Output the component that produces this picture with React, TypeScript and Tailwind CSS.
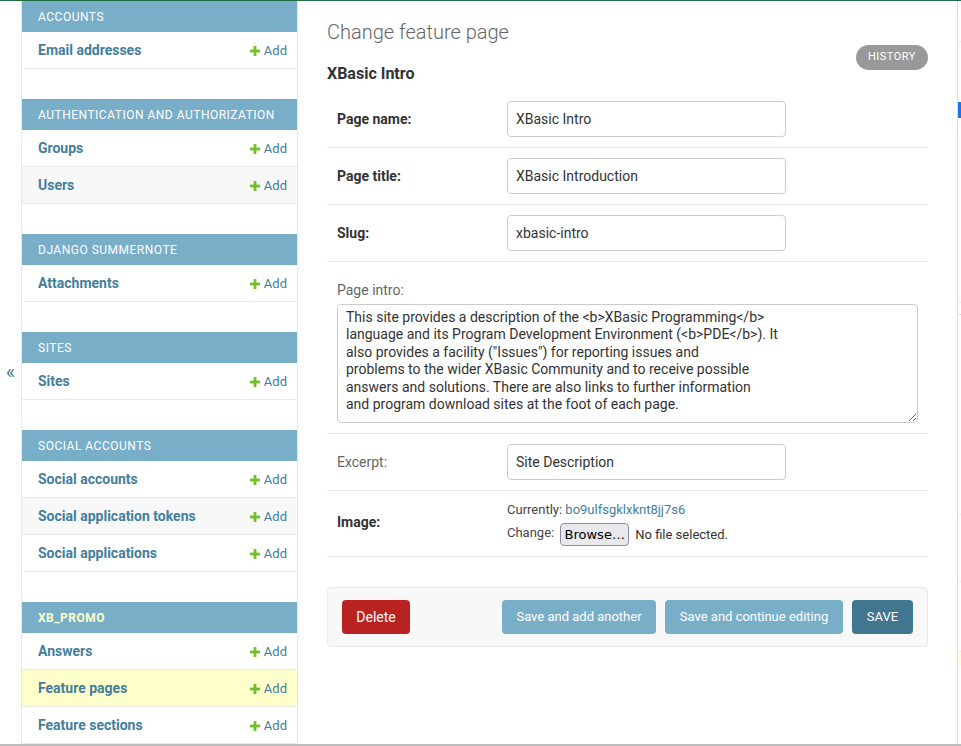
import React from "react";

type Model = { name: string; current?: boolean };
type Module = { caption: string; current?: boolean; models: Model[] };

const modules: Module[] = [
  { caption: "Accounts", models: [{ name: "Email addresses" }] },
  {
    caption: "Authentication and Authorization",
    models: [{ name: "Groups" }, { name: "Users" }],
  },
  { caption: "Django Summernote", models: [{ name: "Attachments" }] },
  { caption: "Sites", models: [{ name: "Sites" }] },
  {
    caption: "Social Accounts",
    models: [
      { name: "Social accounts" },
      { name: "Social application tokens" },
      { name: "Social applications" },
    ],
  },
  {
    caption: "xb_promo",
    current: true,
    models: [
      { name: "Answers" },
      { name: "Feature pages", current: true },
      { name: "Feature sections" },
    ],
  },
];

const PlusIcon = () => (
  <svg width="10" height="10" viewBox="0 0 10 10" className="mr-[4px]">
    <rect x="3.6" y="0" width="2.8" height="10" fill="#70bf2b" />
    <rect x="0" y="3.6" width="10" height="2.8" fill="#70bf2b" />
  </svg>
);

const Sidebar = () => (
  <div className="w-[277px] shrink-0 border-x border-[#e8e8e8] bg-white">
    {modules.map((m) => (
      <div key={m.caption} className="mb-[30px]">
        <div
          className={
            m.current
              ? "h-[31px] bg-[#79aec8] pl-[16px] flex items-center text-[12px] uppercase tracking-[0.5px] font-bold text-[#ffffcc]"
              : "h-[31px] bg-[#79aec8] pl-[16px] flex items-center text-[12px] uppercase tracking-[0.5px] text-white"
          }
        >
          {m.caption}
        </div>
        {m.models.map((model, i) => (
          <div
            key={model.name}
            className={
              model.current
                ? "h-[37px] flex items-center justify-between pl-[16px] pr-[10px] border-b border-[#eaeaea] bg-[#ffffcc]"
                : i % 2 === 1
                ? "h-[37px] flex items-center justify-between pl-[16px] pr-[10px] border-b border-[#eaeaea] bg-[#f8f8f8]"
                : "h-[37px] flex items-center justify-between pl-[16px] pr-[10px] border-b border-[#eaeaea] bg-white"
            }
          >
            <span className="text-[14px] font-bold text-[#447e9b]">{model.name}</span>
            <span className="flex items-center text-[13px] text-[#447e9b] pt-[1px]">
              <PlusIcon />
              Add
            </span>
          </div>
        ))}
      </div>
    ))}
  </div>
);

const TextRow = ({ label, value, required = true }: { label: string; value: string; required?: boolean }) => (
  <div className="flex items-center py-[10px] px-[10px] border-b border-[#eaeaea]">
    <label
      className={
        required
          ? "w-[170px] shrink-0 text-[14px] font-bold text-[#333]"
          : "w-[170px] shrink-0 text-[14px] text-[#666]"
      }
    >
      {label}
    </label>
    <input
      readOnly
      value={value}
      className="w-[279px] h-[36px] border border-[#cccccc] rounded-[4px] px-[8px] text-[14px] text-[#333] bg-white outline-none"
    />
  </div>
);

const intro =
  'This site provides a description of the <b>XBasic Programming</b>\nlanguage and its Program Development Environment (<b>PDE</b>). It\nalso provides a facility ("Issues") for reporting issues and\nproblems to the wider XBasic Community and to receive possible\nanswers and solutions. There are also links to further information\nand program download sites at the foot of each page.';

export default function App() {
  return (
    <div className="w-[961px] h-[746px] overflow-hidden flex flex-col bg-white font-['Roboto','Liberation_Sans',sans-serif] text-[#333]">
      <div className="h-[1px] bg-[#1f6e43] shrink-0" />
      <div className="flex flex-1 min-h-0">
        <div className="w-[21px] shrink-0 flex items-center justify-center text-[20px] text-[#447e9b] pb-[2px]">
          «
        </div>
        <Sidebar />
        <main className="flex-1 pt-[19px] px-[29px]">
          <h1 className="text-[20px] leading-[24px] font-light text-[#666]">Change feature page</h1>
          <div className="flex items-start justify-between">
            <h2 className="mt-[20px] text-[16px] leading-[20px] font-bold text-[#333]">XBasic Intro</h2>
            <span className="mt-[1px] h-[25px] w-[72px] rounded-full bg-[#999] text-white text-[11px] tracking-[0.5px] flex items-center justify-center">
              HISTORY
            </span>
          </div>
          <div className="mt-[7px]">
            <TextRow label="Page name:" value="XBasic Intro" />
            <TextRow label="Page title:" value="XBasic Introduction" />
            <TextRow label="Slug:" value="xbasic-intro" />
            <div className="pt-[20px] pb-[10px] px-[10px] border-b border-[#eaeaea]">
              <label className="block text-[14px] leading-[18px] text-[#666] -mt-[1px] mb-[1px]">Page intro:</label>
              <textarea
                readOnly
                value={intro}
                className="mt-[5px] w-[581px] h-[119px] border border-[#cccccc] rounded-[4px] px-[8px] pt-[4px] text-[14px] leading-[17.4px] text-[#333] bg-white outline-none resize-y block"
              />
            </div>
            <TextRow label="Excerpt:" value="Site Description" required={false} />
            <div className="flex items-center pt-[11px] pb-[10px] px-[10px] border-b border-[#eaeaea]">
              <label className="w-[170px] shrink-0 -mt-[4px] text-[14px] font-bold text-[#333]">Image:</label>
              <div className="flex flex-col text-[13px] text-[#444]">
                <div className="leading-[16px]">
                  Currently: <span className="text-[#447e9b]">bo9ulfsgklxknt8jj7s6</span>
                </div>
                <div className="mt-[5px] flex items-center">
                  <span className="-mt-[4px]">Change:</span>
                  <button className="ml-[6px] h-[23px] w-[69px] border border-[#8f8f9d] rounded-[4px] bg-[#e9e9ed] text-[13px] text-black font-['DejaVu_Sans',sans-serif]">
                    Browse…
                  </button>
                  <span className="ml-[6px] text-[#333]">No file selected.</span>
                </div>
              </div>
            </div>
          </div>
          <div className="mt-[30px] flex items-center justify-between border border-[#eaeaea] rounded-[4px] bg-[#f8f8f8] px-[14px] py-[12px]">
            <span className="h-[34px] w-[68px] rounded-[4px] bg-[#ba2121] text-white text-[14px] flex items-center justify-center">
              Delete
            </span>
            <div className="flex gap-[9px]">
              <span className="h-[34px] w-[154px] rounded-[4px] bg-[#79aec8] text-white text-[13px] flex items-center justify-center">
                Save and add another
              </span>
              <span className="h-[34px] w-[178px] rounded-[4px] bg-[#79aec8] text-white text-[13px] flex items-center justify-center">
                Save and continue editing
              </span>
              <span className="h-[34px] w-[61px] rounded-[4px] bg-[#417690] text-white text-[13px] flex items-center justify-center">
                SAVE
              </span>
            </div>
          </div>
        </main>
        <div className="w-[4px] shrink-0 border-l border-[#dddddd] flex flex-col">
          <div className="h-[41px] border-b border-[#eeeeee]" />
          <div className="h-[60px]" />
          <div className="h-[16px] bg-[#1a73e8]" />
          <div className="h-[185px] border-b border-[#eeeeee]" />
          <div className="h-[12px] border-b border-[#dddddd]" />
          <div className="h-[200px] border-b border-[#eeeeee]" />
          <div className="h-[67px] border-b border-[#eeeeee]" />
          <div className="h-[70px] border-b border-[#eeeeee]" />
          <div className="h-[14px] bg-[#fffbe0]" />
        </div>
      </div>
      <div className="h-[2px] bg-[#bdbdbd] shrink-0" />
    </div>
  );
}
